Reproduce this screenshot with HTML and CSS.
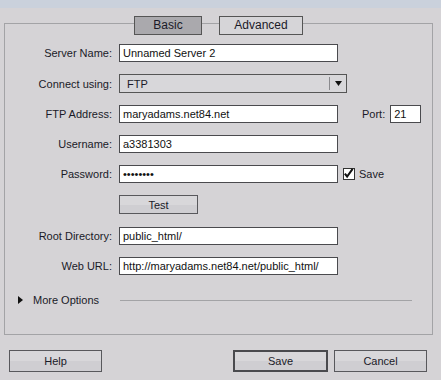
FILE: index.html
```html
<!DOCTYPE html>
<html lang="en">
<head>
    <meta charset="UTF-8">
    <title>Site Setup - Server</title>
    <link rel="stylesheet" href="styles.css">
</head>
<body>
    <div class="topband"></div>

    <div class="tabs">
        <div class="tab active">Basic</div>
        <div class="tab">Advanced</div>
    </div>

    <div class="group">
        <div class="row">
            <label class="label" for="serverName">Server Name:</label>
            <input class="field" id="serverName" type="text" value="Unnamed Server 2">
        </div>

        <div class="row">
            <span class="label">Connect using:</span>
            <div class="select">
                <span class="select-text">FTP</span>
                <span class="select-arrow">
                    <svg width="7" height="5" viewBox="0 0 7 5"><path d="M0 0h7L3.5 5z" fill="#111"/></svg>
                </span>
            </div>
        </div>

        <div class="row">
            <label class="label" for="ftpAddress">FTP Address:</label>
            <input class="field" id="ftpAddress" type="text" value="maryadams.net84.net">
            <label class="port-label" for="port">Port:</label>
            <input class="field port" id="port" type="text" value="21">
        </div>

        <div class="row">
            <label class="label" for="username">Username:</label>
            <input class="field" id="username" type="text" value="a3381303">
        </div>

        <div class="row">
            <label class="label" for="password">Password:</label>
            <input class="field" id="password" type="password" value="12345678">
            <span class="check">
                <svg width="12" height="12" viewBox="0 0 12 12"><path d="M2 5.5l2.5 3.2L10.5 0.5" fill="none" stroke="#111" stroke-width="2.2"/></svg>
            </span>
            <span class="check-label">Save</span>
        </div>

        <div class="row">
            <span class="label"></span>
            <button class="btn test">Test</button>
        </div>

        <div class="row row-root">
            <label class="label" for="rootDir">Root Directory:</label>
            <input class="field" id="rootDir" type="text" value="public_html/">
        </div>

        <div class="row">
            <label class="label" for="webUrl">Web URL:</label>
            <input class="field" id="webUrl" type="text" value="http://maryadams.net84.net/public_html/">
        </div>

        <div class="more">
            <svg class="more-arrow" width="5" height="8" viewBox="0 0 5 8"><path d="M0 0l5 4-5 4z" fill="#111"/></svg>
            <span class="more-text">More Options</span>
            <span class="more-rule"></span>
        </div>
    </div>

    <div class="footer">
        <button class="btn">Help</button>
        <span class="spacer"></span>
        <button class="btn default">Save</button>
        <button class="btn">Cancel</button>
    </div>
</body>
</html>
```

FILE: styles.css
```css
body {
    margin: 0;
    background-color: #d5d3d6;
    color: #1a1a28;
    font-family: "Liberation Sans", Arial, sans-serif;
    font-size: 11px;
    width: 441px;
    height: 380px;
    overflow: hidden;
}
.topband {
    height: 8px;
    background-color: #cad1dc;
}
.tabs {
    display: flex;
    gap: 17px;
    padding-left: 134px;
    margin-top: 8px;
    margin-bottom: -12px;
    position: relative;
    z-index: 1;
}
.tab {
    box-sizing: border-box;
    height: 19px;
    line-height: 17px;
    text-align: center;
    border: 1px solid #555;
    background-color: #d6d5d8;
    font-size: 12px;
}
.tab:first-child {
    width: 68px;
}
.tab:last-child {
    width: 84px;
}
.tab.active {
    background-color: #aaa9ad;
}
.group {
    box-sizing: border-box;
    margin: 0 8px 0 4px;
    height: 312px;
    border: 1px solid #a3a3a6;
    padding-top: 20px;
}
.row {
    display: flex;
    align-items: center;
    margin-bottom: 12px;
}
.row-root {
    margin-top: 13px;
}
.label {
    width: 107px;
    margin-right: 7px;
    text-align: right;
    flex-shrink: 0;
}
.field {
    box-sizing: border-box;
    width: 219px;
    height: 18px;
    margin: 0;
    padding: 0 3px;
    border: 1px solid #4a4a4e;
    border-radius: 0;
    background-color: #fff;
    color: #111;
    font-family: inherit;
    font-size: 11px;
    outline: none;
}
.select {
    box-sizing: border-box;
    display: flex;
    align-items: center;
    width: 228px;
    height: 19px;
    border: 1px solid #555;
    background-color: #d8d7da;
}
.select-text {
    flex: 1;
    padding-left: 7px;
}
.select-arrow {
    display: flex;
    align-items: center;
    justify-content: center;
    width: 16px;
    height: 13px;
    border-left: 1px solid #8a8a8e;
}
.port-label {
    margin-left: 24px;
    margin-right: 5px;
}
.field.port {
    width: 31px;
}
.check {
    box-sizing: border-box;
    display: flex;
    width: 12px;
    height: 12px;
    margin-left: 5px;
    border: 1px solid #333;
    background-color: #fff;
}
.check svg {
    margin: -1px 0 0 -1px;
}
.check-label {
    margin-left: 4px;
}
.btn {
    box-sizing: border-box;
    height: 22px;
    margin: 0;
    padding: 0;
    border: 1px solid #58585c;
    border-radius: 0;
    background: linear-gradient(#d8d7da 50%, #cfced2 50%);
    color: #1a1a28;
    font-family: inherit;
    font-size: 11px;
}
.btn.test {
    width: 79px;
    height: 19px;
}
.more {
    display: flex;
    align-items: center;
    height: 16px;
    margin-top: 17px;
    padding-left: 13px;
    padding-right: 20px;
}
.more-arrow {
    margin-right: 10px;
}
.more-rule {
    flex: 1;
    margin-left: 21px;
    border-top: 1px solid #a3a3a6;
}
.footer {
    display: flex;
    gap: 6px;
    margin-top: 15px;
    padding: 0 14px 0 9px;
}
.footer .btn {
    width: 93px;
}
.footer .btn.default {
    width: 95px;
    border: 2px solid #4a4a4e;
}
.spacer {
    flex: 1;
}
```
